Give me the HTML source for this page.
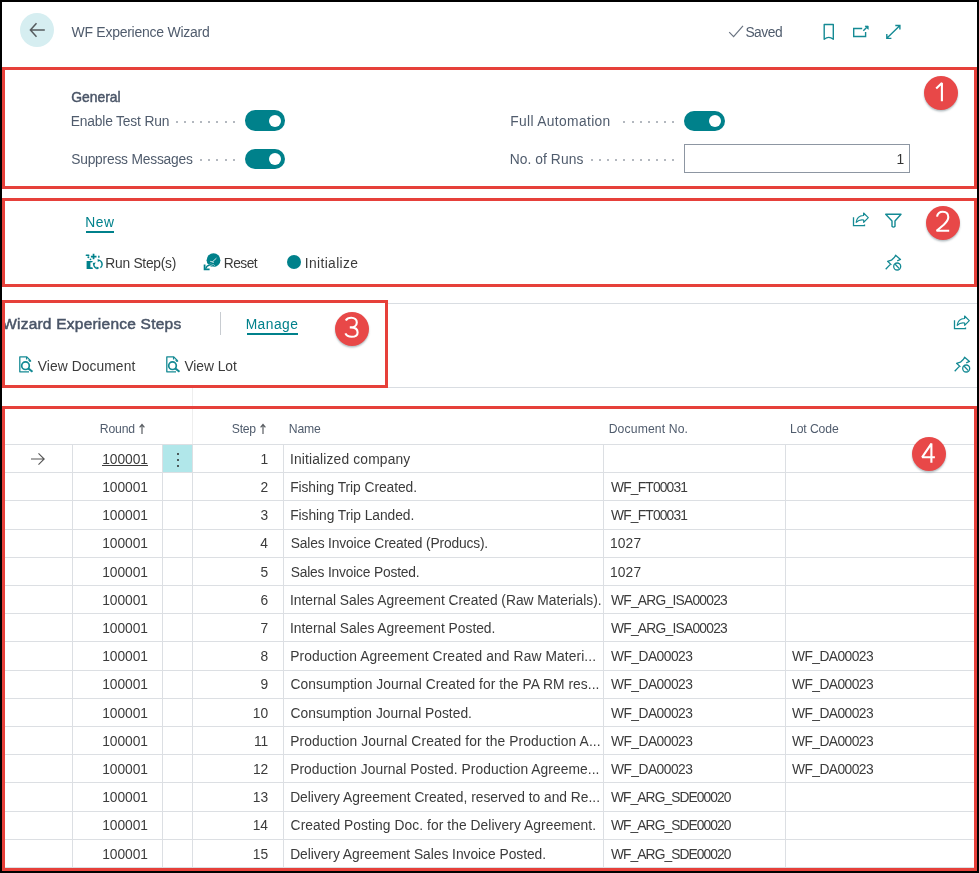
<!DOCTYPE html>
<html><head><meta charset="utf-8"><style>
html,body{margin:0;padding:0;}
body{width:979px;height:873px;position:relative;overflow:hidden;background:#fff;font-family:"Liberation Sans",sans-serif;}
.frame{position:absolute;left:0;top:0;width:979px;height:873px;box-sizing:border-box;border:2px solid #000;pointer-events:none;z-index:50}
.t{position:absolute;white-space:nowrap;line-height:normal;}
.r{position:absolute;}
.rb{position:absolute;box-sizing:border-box;}
.s{position:absolute;overflow:visible}
.badge{position:absolute;width:34px;height:34px;border-radius:50%;background:#e84848;box-shadow:0 1.5px 2px rgba(40,70,80,0.35);z-index:20}
.badge span{position:absolute;left:0;top:0;width:34px;text-align:center;font-size:26px;line-height:34px;color:#fff;font-weight:400}
</style></head><body>
<div id="wrap" style="position:absolute;left:0;top:0;width:979px;height:873px;will-change:transform">
<div class="r" style="left:20px;top:13px;width:34px;height:34px;border-radius:50%;background:#d6eef1"></div><svg class="s" style="left:25px;top:18px" width="24" height="24" viewBox="0 0 24 24"><path d="M19.8 12.1H5.6M11.5 5.2L5.4 12.1l6.1 6.6" fill="none" stroke="#555b5e" stroke-width="1.5"/></svg><div class="t" style="left:71.44px;top:24px;font-size:14.0px;color:#505c6d;letter-spacing:-0.257px;">WF Experience Wizard</div><svg class="s" style="left:720px;top:18px" width="24" height="24" viewBox="0 0 24 24"><path d="M9.2 14.2l4.4 4.4L23 7.9" fill="none" stroke="#6a7482" stroke-width="1.2"/></svg><div class="t" style="left:745.39px;top:25px;font-size:13.8px;color:#505c6d;letter-spacing:-0.462px;">Saved</div><svg class="s" style="left:816px;top:20px" width="24" height="24" viewBox="0 0 24 24"><path d="M8.2 19.2V4.5H17.3V19.2Q12.8 15.6 8.2 19.2Z" fill="none" stroke="#148a94" stroke-width="1.4" stroke-linejoin="round"/></svg><svg class="s" style="left:849px;top:20px" width="24" height="24" viewBox="0 0 24 24"><path d="M13.2 8.5H4.7V16.5H16.6V12.1" fill="none" stroke="#148a94" stroke-width="1.4"/><path d="M14.3 10.7L17.6 7.4" stroke="#148a94" stroke-width="1.4"/><path d="M16 6.1H19.2V9.3Z" fill="#148a94" stroke="#148a94" stroke-width="0.8"/></svg><svg class="s" style="left:882px;top:20px" width="24" height="24" viewBox="0 0 24 24"><path d="M5.3 17.7L17.7 5.7M13.3 5.5H17.9V9.6M4.8 14V18.4H9.4" fill="none" stroke="#148a94" stroke-width="1.4"/></svg><div class="t" style="left:71.31px;top:89px;font-size:13.9px;color:#4a5567;letter-spacing:-0.007px;-webkit-text-stroke:0.45px #4a5567;">General</div><div class="t" style="left:70.67px;top:114px;font-size:13.8px;color:#505c6d;letter-spacing:-0.157px;">Enable Test Run</div><div class="t" style="left:71.19px;top:152px;font-size:13.8px;color:#505c6d;letter-spacing:-0.208px;">Suppress Messages</div><div class="t" style="left:510.17px;top:114px;font-size:13.8px;color:#505c6d;letter-spacing:0.358px;">Full Automation</div><div class="t" style="left:509.77px;top:152px;font-size:13.8px;color:#505c6d;letter-spacing:0.066px;">No. of Runs</div><div class="r" style="left:232.60px;top:120.80px;width:2px;height:2px;background:#b3b8bf"></div><div class="r" style="left:224.52px;top:120.80px;width:2px;height:2px;background:#b3b8bf"></div><div class="r" style="left:216.44px;top:120.80px;width:2px;height:2px;background:#b3b8bf"></div><div class="r" style="left:208.36px;top:120.80px;width:2px;height:2px;background:#b3b8bf"></div><div class="r" style="left:200.28px;top:120.80px;width:2px;height:2px;background:#b3b8bf"></div><div class="r" style="left:192.20px;top:120.80px;width:2px;height:2px;background:#b3b8bf"></div><div class="r" style="left:184.12px;top:120.80px;width:2px;height:2px;background:#b3b8bf"></div><div class="r" style="left:176.04px;top:120.80px;width:2px;height:2px;background:#b3b8bf"></div><div class="r" style="left:232.60px;top:159.00px;width:2px;height:2px;background:#b3b8bf"></div><div class="r" style="left:224.52px;top:159.00px;width:2px;height:2px;background:#b3b8bf"></div><div class="r" style="left:216.44px;top:159.00px;width:2px;height:2px;background:#b3b8bf"></div><div class="r" style="left:208.36px;top:159.00px;width:2px;height:2px;background:#b3b8bf"></div><div class="r" style="left:200.28px;top:159.00px;width:2px;height:2px;background:#b3b8bf"></div><div class="r" style="left:671.90px;top:120.80px;width:2px;height:2px;background:#b3b8bf"></div><div class="r" style="left:663.82px;top:120.80px;width:2px;height:2px;background:#b3b8bf"></div><div class="r" style="left:655.74px;top:120.80px;width:2px;height:2px;background:#b3b8bf"></div><div class="r" style="left:647.66px;top:120.80px;width:2px;height:2px;background:#b3b8bf"></div><div class="r" style="left:639.58px;top:120.80px;width:2px;height:2px;background:#b3b8bf"></div><div class="r" style="left:631.50px;top:120.80px;width:2px;height:2px;background:#b3b8bf"></div><div class="r" style="left:623.42px;top:120.80px;width:2px;height:2px;background:#b3b8bf"></div><div class="r" style="left:671.90px;top:159.00px;width:2px;height:2px;background:#b3b8bf"></div><div class="r" style="left:663.82px;top:159.00px;width:2px;height:2px;background:#b3b8bf"></div><div class="r" style="left:655.74px;top:159.00px;width:2px;height:2px;background:#b3b8bf"></div><div class="r" style="left:647.66px;top:159.00px;width:2px;height:2px;background:#b3b8bf"></div><div class="r" style="left:639.58px;top:159.00px;width:2px;height:2px;background:#b3b8bf"></div><div class="r" style="left:631.50px;top:159.00px;width:2px;height:2px;background:#b3b8bf"></div><div class="r" style="left:623.42px;top:159.00px;width:2px;height:2px;background:#b3b8bf"></div><div class="r" style="left:615.34px;top:159.00px;width:2px;height:2px;background:#b3b8bf"></div><div class="r" style="left:607.26px;top:159.00px;width:2px;height:2px;background:#b3b8bf"></div><div class="r" style="left:599.18px;top:159.00px;width:2px;height:2px;background:#b3b8bf"></div><div class="r" style="left:591.10px;top:159.00px;width:2px;height:2px;background:#b3b8bf"></div><div class="r" style="left:244.80px;top:110.30px;width:40.4px;height:20.4px;border-radius:10.2px;background:#00818b"></div><div class="r" style="left:269.00px;top:114.50px;width:12.2px;height:12.2px;border-radius:50%;background:#fff"></div><div class="r" style="left:244.80px;top:148.80px;width:40.4px;height:20.4px;border-radius:10.2px;background:#00818b"></div><div class="r" style="left:269.00px;top:153.00px;width:12.2px;height:12.2px;border-radius:50%;background:#fff"></div><div class="r" style="left:684.30px;top:110.50px;width:40.4px;height:20.4px;border-radius:10.2px;background:#00818b"></div><div class="r" style="left:708.50px;top:114.70px;width:12.2px;height:12.2px;border-radius:50%;background:#fff"></div><div class="rb" style="left:684px;top:144px;width:226px;height:29px;border:1px solid #8d96a2"></div><div class="t" style="left:896.49px;top:152px;font-size:13.8px;color:#333;">1</div><div class="t" style="left:85.27px;top:215px;font-size:13.8px;color:#00818b;letter-spacing:0.488px;">New</div><div class="r" style="left:86px;top:231px;width:28px;height:2px;background:#00818b"></div><div class="t" style="left:105.27px;top:256px;font-size:13.8px;color:#3b3b3b;letter-spacing:-0.255px;">Run Step(s)</div><div class="t" style="left:223.77px;top:256px;font-size:13.8px;color:#3b3b3b;letter-spacing:-0.558px;">Reset</div><div class="t" style="left:304.83px;top:256px;font-size:13.8px;color:#3b3b3b;letter-spacing:0.359px;">Initialize</div><svg class="s" style="left:82px;top:250px" width="24" height="24" viewBox="0 0 24 24"><g fill="#00818b"><rect x="3.6" y="4.5" width="3.9" height="1.5" rx="0.7"/><circle cx="6.4" cy="7.3" r="1"/><circle cx="8.5" cy="9.3" r="0.9"/><path d="M8.9 5.7h1.8V3.8h1.7v1.9h2.1v1.7h-2.1v1.9h-1.7V7.4H8.9z"/><rect x="16.2" y="5.6" width="1.3" height="2.3" rx="0.6"/><path d="M4.6 11h6.2L10.2 12.3L8.4 12.5V17.2H10.3L11 19H4.6z"/></g><path d="M16.6 10.1A4.2 4.2 0 0 1 18.4 17.6M11.8 13.4A4.2 4.2 0 0 0 15.2 18.4" fill="none" stroke="#00818b" stroke-width="1.4"/><path d="M15.6 8.9l2.6 1.5-2.4 1.7z M10.6 12.9l3.2-0.5-1.6 2.6z M14.6 16.4l2.8 1.6-2.6 1.6z" fill="#00818b"/></svg><svg class="s" style="left:200px;top:250px" width="24" height="24" viewBox="0 0 24 24"><circle cx="13.5" cy="10.2" r="6.9" fill="#00818b"/><path d="M16.4 8.2L12.3 11.9M10.2 11.3L13.9 12.4" stroke="#fff" stroke-width="0.9" opacity="0.9"/><path d="M14.3 16.2a5.3 5.3 0 0 0-8.6 2.4" fill="none" stroke="#fff" stroke-width="2.2"/><path d="M14.3 16.2a5.3 5.3 0 0 0-8.6 2.4" fill="none" stroke="#00818b" stroke-width="1.5"/><path d="M4.6 14.5V19.3H9.6" fill="none" stroke="#00818b" stroke-width="1.8"/></svg><div class="r" style="left:287px;top:254.6px;width:14.4px;height:14.4px;border-radius:50%;background:#00818b"></div><div class="t" style="left:2.14px;top:315px;font-size:15.5px;color:#4a5567;letter-spacing:0.227px;-webkit-text-stroke:0.5px #4a5567;">Wizard Experience Steps</div><div class="r" style="left:220px;top:312px;width:1px;height:23px;background:#c8ccd1"></div><div class="t" style="left:245.67px;top:317px;font-size:13.8px;color:#00818b;letter-spacing:0.473px;">Manage</div><div class="r" style="left:246.5px;top:333px;width:51px;height:2px;background:#00818b"></div><div class="t" style="left:37.74px;top:359px;font-size:13.8px;color:#3b3b3b;letter-spacing:0.094px;">View Document</div><div class="t" style="left:184.44px;top:359px;font-size:13.8px;color:#3b3b3b;letter-spacing:-0.050px;">View Lot</div><svg class="s" style="left:14px;top:352px" width="24" height="24" viewBox="0 0 24 24"><path d="M16.5 9.8V8.6L12.8 4.9H5.8V19.8H15" fill="none" stroke="#148a94" stroke-width="1.3" stroke-linejoin="round"/><path d="M12.6 5v2.5M14.7 7.6l1.3 2" stroke="#148a94" stroke-width="1.3"/><circle cx="11.5" cy="13.7" r="3.8" fill="#fff" stroke="#148a94" stroke-width="1.7"/><path d="M14.2 16.4L18.5 19.8" stroke="#148a94" stroke-width="2"/></svg><svg class="s" style="left:161px;top:352px" width="24" height="24" viewBox="0 0 24 24"><path d="M16.5 9.8V8.6L12.8 4.9H5.8V19.8H15" fill="none" stroke="#148a94" stroke-width="1.3" stroke-linejoin="round"/><path d="M12.6 5v2.5M14.7 7.6l1.3 2" stroke="#148a94" stroke-width="1.3"/><circle cx="11.5" cy="13.7" r="3.8" fill="#fff" stroke="#148a94" stroke-width="1.7"/><path d="M14.2 16.4L18.5 19.8" stroke="#148a94" stroke-width="2"/></svg><svg class="s" style="left:848px;top:207px" width="24" height="24" viewBox="0 0 24 24"><path d="M5.5 10.2V18.7H16.5V17.4" fill="none" stroke="#148a94" stroke-width="1.3"/><path d="M8.2 15.4C8.6 11.3 11.4 8.6 15.6 8.5V6L20.3 10.7L15.7 15.4V13C12.6 12.4 10.2 13.3 8.2 15.4Z" fill="none" stroke="#148a94" stroke-width="1.2" stroke-linejoin="round"/></svg><svg class="s" style="left:881px;top:208px" width="24" height="24" viewBox="0 0 24 24"><path d="M4.7 6.3H20L14 13V18.3Q12.5 20 11 18.3V13Z" fill="none" stroke="#148a94" stroke-width="1.4" stroke-linejoin="round"/></svg><svg class="s" style="left:881px;top:250px" width="24" height="24" viewBox="0 0 24 24"><path d="M16.2 10.9L19.5 9.4L14.6 5.2L13.5 7.3L10.4 10.2L6.6 11.3L10.4 14.9M9.1 14.6L4.7 19.2" fill="none" stroke="#148a94" stroke-width="1.3" stroke-linejoin="round"/><circle cx="16.2" cy="16.5" r="3.5" fill="none" stroke="#148a94" stroke-width="1.3"/><path d="M14.2 14.3L18.3 18.6" stroke="#148a94" stroke-width="1.3"/></svg><svg class="s" style="left:949px;top:310px" width="24" height="24" viewBox="0 0 24 24"><path d="M5.5 10.2V18.7H16.5V17.4" fill="none" stroke="#148a94" stroke-width="1.3"/><path d="M8.2 15.4C8.6 11.3 11.4 8.6 15.6 8.5V6L20.3 10.7L15.7 15.4V13C12.6 12.4 10.2 13.3 8.2 15.4Z" fill="none" stroke="#148a94" stroke-width="1.2" stroke-linejoin="round"/></svg><svg class="s" style="left:950px;top:352px" width="24" height="24" viewBox="0 0 24 24"><path d="M16.2 10.9L19.5 9.4L14.6 5.2L13.5 7.3L10.4 10.2L6.6 11.3L10.4 14.9M9.1 14.6L4.7 19.2" fill="none" stroke="#148a94" stroke-width="1.3" stroke-linejoin="round"/><circle cx="16.2" cy="16.5" r="3.5" fill="none" stroke="#148a94" stroke-width="1.3"/><path d="M14.2 14.3L18.3 18.6" stroke="#148a94" stroke-width="1.3"/></svg><div class="r" style="left:388px;top:303px;width:589px;height:1px;background:#d9dde2"></div><div class="r" style="left:388px;top:387px;width:589px;height:1px;background:#d9dde2"></div><div class="r" style="left:192px;top:388px;width:1px;height:18px;background:#eeeeee"></div><div class="r" style="left:192px;top:409px;width:1px;height:35px;background:#eeeeee"></div><div class="t" style="left:99.80px;top:422px;font-size:12.2px;color:#505c6d;letter-spacing:-0.165px;">Round</div><div class="t" style="left:231.86px;top:422px;font-size:12.2px;color:#505c6d;letter-spacing:-0.328px;">Step</div><div class="t" style="left:288.80px;top:422px;font-size:12.2px;color:#505c6d;letter-spacing:-0.137px;">Name</div><div class="t" style="left:608.70px;top:422px;font-size:12.2px;color:#505c6d;letter-spacing:0.129px;">Document No.</div><div class="t" style="left:790.00px;top:422px;font-size:12.2px;color:#505c6d;letter-spacing:-0.110px;">Lot Code</div><svg class="s" style="left:137.80px;top:422px" width="8" height="13" viewBox="0 0 8 13"><path d="M4 12V2.6M1.6 5.4L4 2.5 6.4 5.4" fill="none" stroke="#5a5e63" stroke-width="1.2"/></svg><svg class="s" style="left:259.00px;top:422px" width="8" height="13" viewBox="0 0 8 13"><path d="M4 12V2.6M1.6 5.4L4 2.5 6.4 5.4" fill="none" stroke="#5a5e63" stroke-width="1.2"/></svg><div class="r" style="left:5px;top:444px;width:969px;height:1px;background:#dcdfe3"></div><div class="r" style="left:5px;top:472px;width:969px;height:1px;background:#dcdfe3"></div><div class="r" style="left:5px;top:500px;width:969px;height:1px;background:#dcdfe3"></div><div class="r" style="left:5px;top:529px;width:969px;height:1px;background:#dcdfe3"></div><div class="r" style="left:5px;top:557px;width:969px;height:1px;background:#dcdfe3"></div><div class="r" style="left:5px;top:585px;width:969px;height:1px;background:#dcdfe3"></div><div class="r" style="left:5px;top:613px;width:969px;height:1px;background:#dcdfe3"></div><div class="r" style="left:5px;top:641px;width:969px;height:1px;background:#dcdfe3"></div><div class="r" style="left:5px;top:670px;width:969px;height:1px;background:#dcdfe3"></div><div class="r" style="left:5px;top:698px;width:969px;height:1px;background:#dcdfe3"></div><div class="r" style="left:5px;top:726px;width:969px;height:1px;background:#dcdfe3"></div><div class="r" style="left:5px;top:754px;width:969px;height:1px;background:#dcdfe3"></div><div class="r" style="left:5px;top:782px;width:969px;height:1px;background:#dcdfe3"></div><div class="r" style="left:5px;top:811px;width:969px;height:1px;background:#dcdfe3"></div><div class="r" style="left:5px;top:839px;width:969px;height:1px;background:#dcdfe3"></div><div class="r" style="left:5px;top:867px;width:969px;height:1px;background:#dcdfe3"></div><div class="r" style="left:102px;top:465px;width:46px;height:1px;background:#3b3b3b"></div><div class="r" style="left:163px;top:445px;width:29px;height:27px;background:#b1e7ea"></div><div class="r" style="left:176.7px;top:452.7px;width:2.2px;height:2.2px;border-radius:50%;background:#2b2b2b"></div><div class="r" style="left:176.7px;top:458.9px;width:2.2px;height:2.2px;border-radius:50%;background:#2b2b2b"></div><div class="r" style="left:176.7px;top:465.1px;width:2.2px;height:2.2px;border-radius:50%;background:#2b2b2b"></div><div class="r" style="left:72px;top:445px;width:1px;height:423px;background:#dcdfe3"></div><div class="r" style="left:162px;top:445px;width:1px;height:423px;background:#dcdfe3"></div><div class="r" style="left:192px;top:445px;width:1px;height:423px;background:#dcdfe3"></div><div class="r" style="left:283px;top:445px;width:1px;height:423px;background:#dcdfe3"></div><div class="r" style="left:603px;top:445px;width:1px;height:423px;background:#dcdfe3"></div><div class="r" style="left:785px;top:445px;width:1px;height:423px;background:#dcdfe3"></div><svg class="s" style="left:30px;top:452px" width="16" height="14" viewBox="0 0 16 14"><path d="M1 7h13.2M8.5 1.3L14.2 7l-5.7 5.7" fill="none" stroke="#555" stroke-width="1.1"/></svg><div class="t" style="left:102.15px;top:452px;font-size:13.8px;color:#3b3b3b;letter-spacing:-0.045px;">100001</div><div class="t" style="left:260.59px;top:452px;font-size:13.8px;color:#3b3b3b;">1</div><div class="t" style="left:290.03px;top:452px;font-size:13.8px;color:#3b3b3b;letter-spacing:0.158px;">Initialized company</div><div class="t" style="left:102.15px;top:480px;font-size:13.8px;color:#3b3b3b;letter-spacing:-0.045px;">100001</div><div class="t" style="left:260.62px;top:480px;font-size:13.8px;color:#3b3b3b;">2</div><div class="t" style="left:290.17px;top:480px;font-size:13.8px;color:#3b3b3b;letter-spacing:-0.061px;">Fishing Trip Created.</div><div class="t" style="left:610.94px;top:480px;font-size:13.8px;color:#3b3b3b;letter-spacing:-0.806px;">WF_FT00031</div><div class="t" style="left:102.15px;top:508px;font-size:13.8px;color:#3b3b3b;letter-spacing:-0.045px;">100001</div><div class="t" style="left:260.51px;top:508px;font-size:13.8px;color:#3b3b3b;">3</div><div class="t" style="left:290.17px;top:508px;font-size:13.8px;color:#3b3b3b;letter-spacing:-0.046px;">Fishing Trip Landed.</div><div class="t" style="left:610.94px;top:508px;font-size:13.8px;color:#3b3b3b;letter-spacing:-0.806px;">WF_FT00031</div><div class="t" style="left:102.15px;top:536px;font-size:13.8px;color:#3b3b3b;letter-spacing:-0.045px;">100001</div><div class="t" style="left:260.31px;top:536px;font-size:13.8px;color:#3b3b3b;">4</div><div class="t" style="left:290.69px;top:536px;font-size:13.8px;color:#3b3b3b;letter-spacing:-0.160px;">Sales Invoice Created (Producs).</div><div class="t" style="left:609.95px;top:536px;font-size:13.8px;color:#3b3b3b;letter-spacing:0.149px;">1027</div><div class="t" style="left:102.15px;top:565px;font-size:13.8px;color:#3b3b3b;letter-spacing:-0.045px;">100001</div><div class="t" style="left:260.48px;top:565px;font-size:13.8px;color:#3b3b3b;">5</div><div class="t" style="left:290.69px;top:565px;font-size:13.8px;color:#3b3b3b;letter-spacing:-0.188px;">Sales Invoice Posted.</div><div class="t" style="left:609.95px;top:565px;font-size:13.8px;color:#3b3b3b;letter-spacing:0.149px;">1027</div><div class="t" style="left:102.15px;top:593px;font-size:13.8px;color:#3b3b3b;letter-spacing:-0.045px;">100001</div><div class="t" style="left:260.51px;top:593px;font-size:13.8px;color:#3b3b3b;">6</div><div class="t" style="left:290.03px;top:593px;font-size:13.8px;color:#3b3b3b;letter-spacing:-0.010px;">Internal Sales Agreement Created (Raw Materials).</div><div class="t" style="left:610.94px;top:593px;font-size:13.8px;color:#3b3b3b;letter-spacing:-0.749px;">WF_ARG_ISA00023</div><div class="t" style="left:102.15px;top:621px;font-size:13.8px;color:#3b3b3b;letter-spacing:-0.045px;">100001</div><div class="t" style="left:260.62px;top:621px;font-size:13.8px;color:#3b3b3b;">7</div><div class="t" style="left:290.03px;top:621px;font-size:13.8px;color:#3b3b3b;letter-spacing:-0.006px;">Internal Sales Agreement Posted.</div><div class="t" style="left:610.94px;top:621px;font-size:13.8px;color:#3b3b3b;letter-spacing:-0.749px;">WF_ARG_ISA00023</div><div class="t" style="left:102.15px;top:649px;font-size:13.8px;color:#3b3b3b;letter-spacing:-0.045px;">100001</div><div class="t" style="left:260.51px;top:649px;font-size:13.8px;color:#3b3b3b;">8</div><div class="t" style="left:290.17px;top:649px;font-size:13.8px;color:#3b3b3b;letter-spacing:0.100px;">Production Agreement Created and Raw Materi...</div><div class="t" style="left:610.94px;top:649px;font-size:13.8px;color:#3b3b3b;letter-spacing:-0.525px;">WF_DA00023</div><div class="t" style="left:791.94px;top:649px;font-size:13.8px;color:#3b3b3b;letter-spacing:-0.559px;">WF_DA00023</div><div class="t" style="left:102.15px;top:677px;font-size:13.8px;color:#3b3b3b;letter-spacing:-0.045px;">100001</div><div class="t" style="left:260.56px;top:677px;font-size:13.8px;color:#3b3b3b;">9</div><div class="t" style="left:290.61px;top:677px;font-size:13.8px;color:#3b3b3b;letter-spacing:0.048px;">Consumption Journal Created for the PA RM res...</div><div class="t" style="left:610.94px;top:677px;font-size:13.8px;color:#3b3b3b;letter-spacing:-0.525px;">WF_DA00023</div><div class="t" style="left:791.94px;top:677px;font-size:13.8px;color:#3b3b3b;letter-spacing:-0.559px;">WF_DA00023</div><div class="t" style="left:102.15px;top:706px;font-size:13.8px;color:#3b3b3b;letter-spacing:-0.045px;">100001</div><div class="t" style="left:252.78px;top:706px;font-size:13.8px;color:#3b3b3b;">10</div><div class="t" style="left:290.61px;top:706px;font-size:13.8px;color:#3b3b3b;letter-spacing:0.012px;">Consumption Journal Posted.</div><div class="t" style="left:610.94px;top:706px;font-size:13.8px;color:#3b3b3b;letter-spacing:-0.525px;">WF_DA00023</div><div class="t" style="left:791.94px;top:706px;font-size:13.8px;color:#3b3b3b;letter-spacing:-0.559px;">WF_DA00023</div><div class="t" style="left:102.15px;top:734px;font-size:13.8px;color:#3b3b3b;letter-spacing:-0.045px;">100001</div><div class="t" style="left:253.94px;top:734px;font-size:13.8px;color:#3b3b3b;">11</div><div class="t" style="left:290.17px;top:734px;font-size:13.8px;color:#3b3b3b;letter-spacing:0.123px;">Production Journal Created for the Production A...</div><div class="t" style="left:610.94px;top:734px;font-size:13.8px;color:#3b3b3b;letter-spacing:-0.525px;">WF_DA00023</div><div class="t" style="left:791.94px;top:734px;font-size:13.8px;color:#3b3b3b;letter-spacing:-0.559px;">WF_DA00023</div><div class="t" style="left:102.15px;top:762px;font-size:13.8px;color:#3b3b3b;letter-spacing:-0.045px;">100001</div><div class="t" style="left:252.94px;top:762px;font-size:13.8px;color:#3b3b3b;">12</div><div class="t" style="left:290.17px;top:762px;font-size:13.8px;color:#3b3b3b;letter-spacing:0.068px;">Production Journal Posted. Production Agreeme...</div><div class="t" style="left:610.94px;top:762px;font-size:13.8px;color:#3b3b3b;letter-spacing:-0.525px;">WF_DA00023</div><div class="t" style="left:791.94px;top:762px;font-size:13.8px;color:#3b3b3b;letter-spacing:-0.559px;">WF_DA00023</div><div class="t" style="left:102.15px;top:790px;font-size:13.8px;color:#3b3b3b;letter-spacing:-0.045px;">100001</div><div class="t" style="left:252.83px;top:790px;font-size:13.8px;color:#3b3b3b;">13</div><div class="t" style="left:290.17px;top:790px;font-size:13.8px;color:#3b3b3b;">Delivery Agreement Created, reserved to and Re...</div><div class="t" style="left:610.94px;top:790px;font-size:13.8px;color:#3b3b3b;letter-spacing:-0.919px;">WF_ARG_SDE00020</div><div class="t" style="left:102.15px;top:818px;font-size:13.8px;color:#3b3b3b;letter-spacing:-0.045px;">100001</div><div class="t" style="left:252.64px;top:818px;font-size:13.8px;color:#3b3b3b;">14</div><div class="t" style="left:290.61px;top:818px;font-size:13.8px;color:#3b3b3b;letter-spacing:0.070px;">Created Posting Doc. for the Delivery Agreement.</div><div class="t" style="left:610.94px;top:818px;font-size:13.8px;color:#3b3b3b;letter-spacing:-0.919px;">WF_ARG_SDE00020</div><div class="t" style="left:102.15px;top:847px;font-size:13.8px;color:#3b3b3b;letter-spacing:-0.045px;">100001</div><div class="t" style="left:252.81px;top:847px;font-size:13.8px;color:#3b3b3b;">15</div><div class="t" style="left:290.17px;top:847px;font-size:13.8px;color:#3b3b3b;letter-spacing:-0.025px;">Delivery Agreement Sales Invoice Posted.</div><div class="t" style="left:610.94px;top:847px;font-size:13.8px;color:#3b3b3b;letter-spacing:-0.919px;">WF_ARG_SDE00020</div><div class="rb" style="left:2px;top:67px;width:975px;height:122px;border:3px solid #e6403a"></div><div class="rb" style="left:2px;top:198px;width:975px;height:89px;border:3px solid #e6403a"></div><div class="rb" style="left:2px;top:300px;width:386px;height:88px;border:3px solid #e6403a"></div><div class="rb" style="left:2px;top:406px;width:975px;height:465px;border:3px solid #e6403a"></div><div class="badge" style="left:924.20px;top:76.20px"></div><svg class="s" style="left:0;top:0;z-index:21" width="979" height="873" viewBox="0 0 979 873"><path d="M936.2 88.6L941.9 83V101.3" fill="none" stroke="#fff" stroke-width="2.1" stroke-linecap="butt" stroke-linejoin="bevel"/></svg><div class="badge" style="left:926.20px;top:205.90px"></div><svg class="s" style="left:0;top:0;z-index:21" width="979" height="873" viewBox="0 0 979 873"><path d="M937 216.6C937.6 213.4 939.8 211.8 942.8 211.8C946 211.8 948.3 213.8 948.3 217.3C948.3 220.2 946.4 222.3 943.8 224.8L936.6 230.7H949.2" fill="none" stroke="#fff" stroke-width="2.1" stroke-linecap="butt" stroke-linejoin="bevel"/></svg><div class="badge" style="left:335.00px;top:311.70px"></div><svg class="s" style="left:0;top:0;z-index:21" width="979" height="873" viewBox="0 0 979 873"><path d="M345.8 320.4C346.8 318.6 348.8 317.7 351.3 317.7C354.6 317.7 356.8 319.6 356.8 322.4C356.8 325.4 354.4 327.4 350.8 327.4H349.8M350.8 327.4C355 327.4 357.6 329.4 357.6 332.4C357.6 335.2 355 336.8 351.6 336.8C348.6 336.8 346.4 335.6 345.4 333.4" fill="none" stroke="#fff" stroke-width="2.1" stroke-linecap="butt" stroke-linejoin="bevel"/></svg><div class="badge" style="left:912.00px;top:437.40px"></div><svg class="s" style="left:0;top:0;z-index:21" width="979" height="873" viewBox="0 0 979 873"><path d="M931.4 462.7V443.6L922.2 457.2H934.9" fill="none" stroke="#fff" stroke-width="2.1" stroke-linecap="butt" stroke-linejoin="bevel"/></svg>
<div class="frame"></div>
</div>
</body></html>
